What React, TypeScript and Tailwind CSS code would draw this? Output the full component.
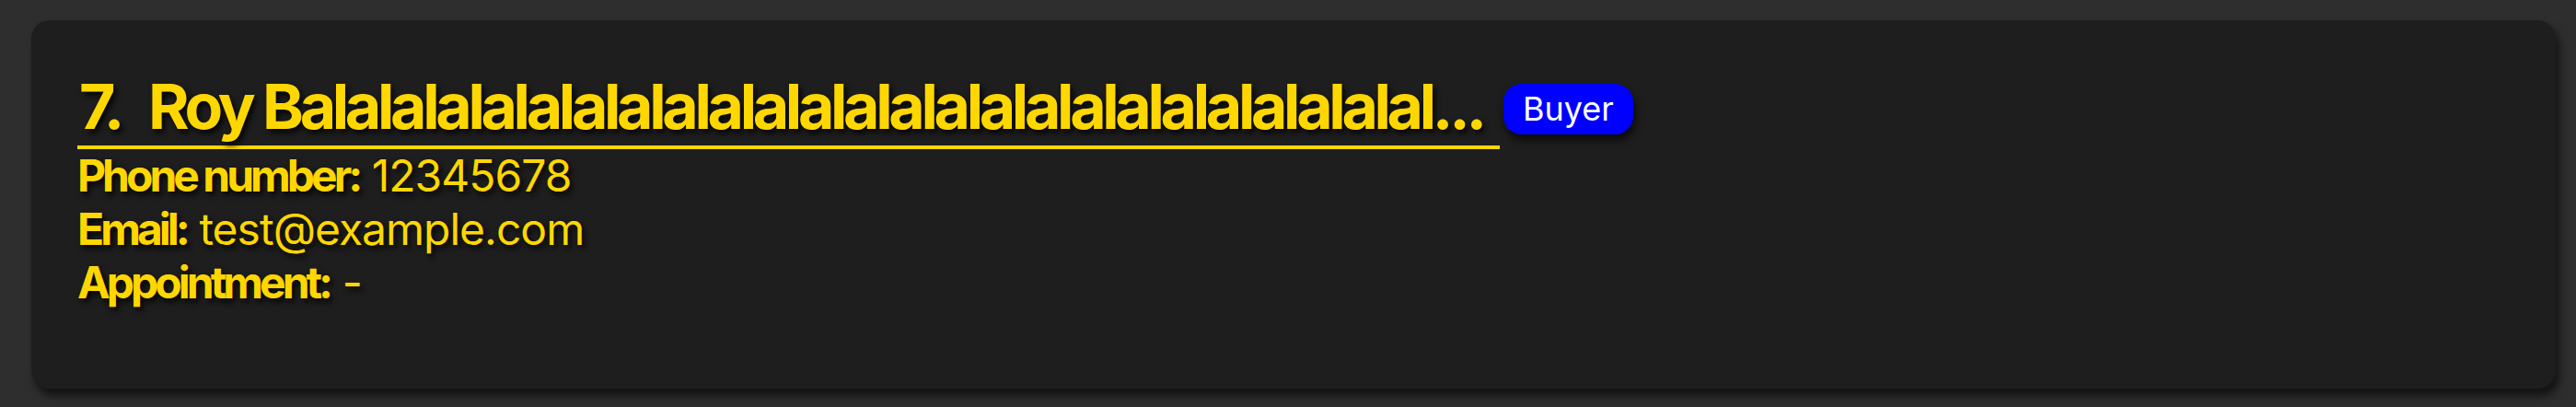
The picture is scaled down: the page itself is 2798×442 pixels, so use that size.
const name = "Roy B" + "al".repeat(25) + "...";

const Field = ({ label, value }: { label: string; value: string }) => (
  <div className="text-[48px] leading-[58px] whitespace-nowrap">
    <span className="font-bold tracking-[-4px]">{label}</span>{" "}
    <span className="font-normal tracking-[-1px]">{value}</span>
  </div>
);

export default function App() {
  return (
    <div className="w-[2798px] h-[442px] bg-[#2e2e2e] pt-[22px] pl-[34px] font-['Inter',sans-serif]">
      <div className="w-[2742px] h-[400px] bg-[#1e1e1e] rounded-[20px] shadow-[4px_8px_10px_rgba(0,0,0,0.6)] pt-[52px] pl-[50px] text-[#ffd700] [text-shadow:3px_4px_6px_rgba(0,0,0,0.85)]">
        {/* title row */}
        <div className="flex items-center">
          <div className="flex w-[1545px] border-b-4 border-[#ffd700] pb-[2px] pl-[2px] text-[68px] leading-[82px] font-bold tracking-[-4.35px] whitespace-nowrap">
            <span>7.</span>
            <span className="ml-[30px]">{name}</span>
          </div>
          <span className="ml-[4px] h-[55px] px-[21px] flex items-center rounded-[20px] bg-[#0000ff] text-white text-[36px] leading-none shadow-[2px_6px_10px_rgba(0,0,0,0.7)] [text-shadow:none]">
            Buyer
          </span>
        </div>
        {/* details */}
        <Field label="Phone number:" value="12345678" />
        <Field label="Email:" value="test@example.com" />
        <Field label="Appointment:" value="-" />
      </div>
    </div>
  );
}
